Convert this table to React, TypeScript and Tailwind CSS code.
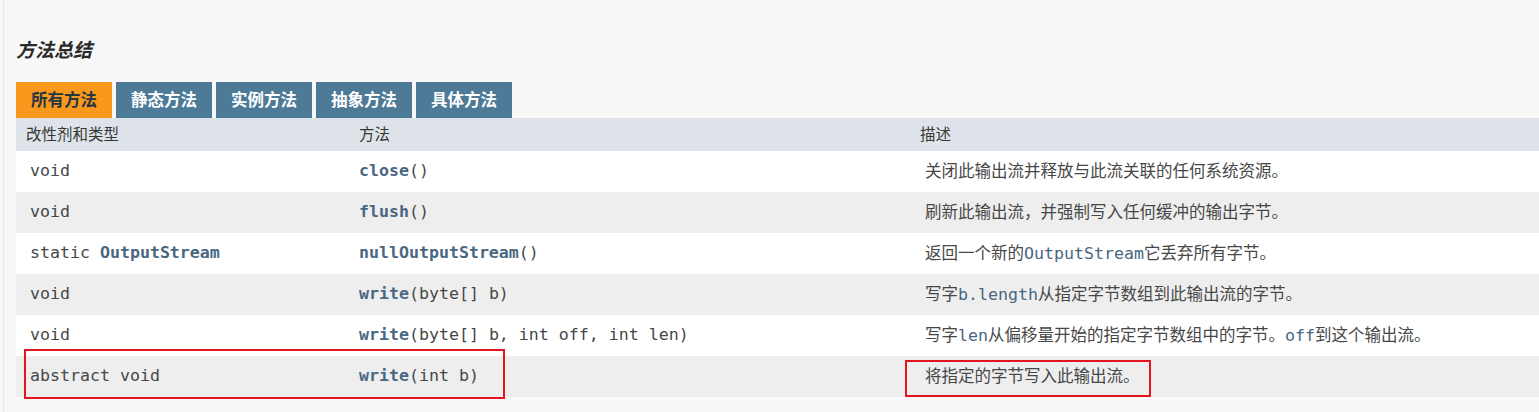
const mono = "font-['DejaVu_Sans_Mono','Liberation_Mono',monospace]";
const cjk = "font-['Noto_Sans','Noto_Sans_CJK_SC',sans-serif]";

type Row = {
  mod: React.ReactNode;
  method: React.ReactNode;
  desc: React.ReactNode;
};

const Code = ({ children }: { children: React.ReactNode }) => (
  <span className={`${mono} text-[16.6px] text-[#4a6782]`}>{children}</span>
);

const Name = ({ children }: { children: React.ReactNode }) => (
  <span className="font-bold text-[#4a6782]">{children}</span>
);

const rows: Row[] = [
  {
    mod: "void",
    method: (
      <>
        <Name>close</Name>()
      </>
    ),
    desc: "关闭此输出流并释放与此流关联的任何系统资源。",
  },
  {
    mod: "void",
    method: (
      <>
        <Name>flush</Name>()
      </>
    ),
    desc: "刷新此输出流，并强制写入任何缓冲的输出字节。",
  },
  {
    mod: (
      <>
        static <Name>OutputStream</Name>
      </>
    ),
    method: (
      <>
        <Name>nullOutputStream</Name>()
      </>
    ),
    desc: (
      <>
        返回一个新的<Code>OutputStream</Code>它丢弃所有字节。
      </>
    ),
  },
  {
    mod: "void",
    method: (
      <>
        <Name>write</Name>(byte[] b)
      </>
    ),
    desc: (
      <>
        写字<Code>b.length</Code>从指定字节数组到此输出流的字节。
      </>
    ),
  },
  {
    mod: "void",
    method: (
      <>
        <Name>write</Name>(byte[] b, int off, int len)
      </>
    ),
    desc: (
      <>
        写字<Code>len</Code>从偏移量开始的指定字节数组中的字节。<Code>off</Code>到这个输出流。
      </>
    ),
  },
  {
    mod: "abstract void",
    method: (
      <>
        <Name>write</Name>(int b)
      </>
    ),
    desc: "将指定的字节写入此输出流。",
  },
];

const tabs = ["所有方法", "静态方法", "实例方法", "抽象方法", "具体方法"];

export default function App() {
  return (
    <div className="min-h-[412px] bg-[#f8f8f8] pl-[3px]">
      <div className="min-h-[412px] border-l border-[#e6e6e6] pl-[12px] pt-[37px]">
        {/* Heading */}
        <h3
          className={`${cjk} text-[19px] leading-[26px] font-bold italic text-[#2a2a2a]`}
        >
          方法总结
        </h3>

        {/* Tabs */}
        <div className="mt-[19px] flex gap-[4px]">
          {tabs.map((t, i) => (
            <div
              key={t}
              className={`${cjk} flex h-[36px] w-[96px] items-center justify-center text-[16.5px] font-bold ${
                i === 0 ? "bg-[#f8981d] text-[#253441]" : "bg-[#4d7a97] text-white"
              }`}
            >
              {t}
            </div>
          ))}
        </div>

        {/* Table */}
        <div className="relative">
          <div className="flex h-[33px] items-center bg-[#dee3e9] text-[15.5px] text-[#353833]">
            <div className={`${cjk} w-[333px] shrink-0 pl-[10px]`}>改性剂和类型</div>
            <div className={`${cjk} w-[561px] shrink-0 pl-[10px]`}>方法</div>
            <div className={`${cjk} flex-1 pl-[10px]`}>描述</div>
          </div>

          {rows.map((r, i) => (
            <div
              key={i}
              className={`flex h-[41px] items-center ${
                i % 2 === 0 ? "bg-white" : "bg-[#eeeeee]"
              }`}
            >
              <div
                className={`${mono} w-[333px] shrink-0 whitespace-pre pl-[14px] text-[16.6px] text-[#474747]`}
              >
                {r.mod}
              </div>
              <div
                className={`${mono} w-[561px] shrink-0 whitespace-pre pl-[10px] text-[16.6px] text-[#474747]`}
              >
                {r.method}
              </div>
              <div
                className={`${cjk} flex-1 whitespace-nowrap pl-[15px] text-[16.5px] text-[#474747]`}
              >
                {r.desc}
              </div>
            </div>
          ))}

          {/* annotation boxes */}
          <div className="pointer-events-none absolute left-[8px] top-[231px] h-[50px] w-[481px] border-2 border-[#e5151f]" />
          <div className="pointer-events-none absolute left-[889px] top-[242px] h-[37px] w-[246px] border-2 border-[#e5151f]" />
        </div>
      </div>
    </div>
  );
}
